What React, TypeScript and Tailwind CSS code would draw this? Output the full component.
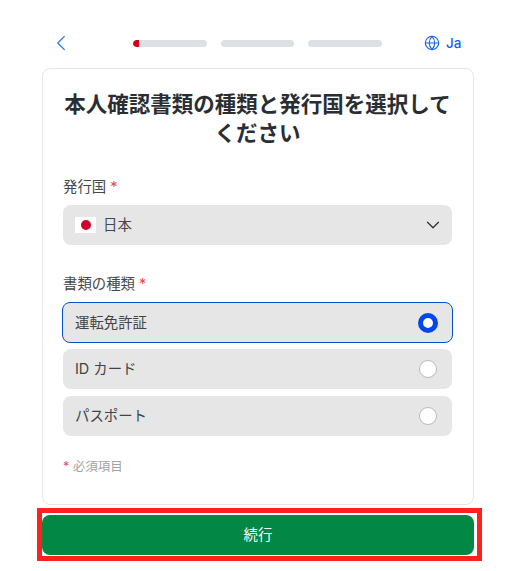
import { ChevronDown, ChevronLeft, Globe } from "lucide-react";

const fontClass = "font-['Inter','Noto_Sans_CJK_JP',sans-serif]";

const documentTypes = [
  { label: "運転免許証", selected: true },
  { label: "ID カード", selected: false },
  { label: "パスポート", selected: false },
];

function Required() {
  return <span className="text-[#f0484e]">*</span>;
}

function RadioRow({ label, selected }: { label: string; selected: boolean }) {
  return (
    <div
      className={`flex items-center justify-between rounded-lg bg-[#e6e6e6] text-[14.4px] text-[#3f4448] ${
        selected
          ? "-mx-px -my-px h-[41px] border border-[#0052cc] pl-[12px] pr-[14px]"
          : "h-10 pl-3 pr-[15px]"
      }`}
    >
      <span>{label}</span>
      {selected ? (
        <span className="h-5 w-5 rounded-full border-[5px] border-[#0047ee] bg-white" />
      ) : (
        <span className="h-[18px] w-[18px] rounded-full border border-[#b9b9b9] bg-white" />
      )}
    </div>
  );
}

export default function App() {
  return (
    <div className={`flex h-[571px] w-[522px] flex-col bg-white pl-[42px] pr-[48px] ${fontClass}`}>
      <header className="flex h-[68px] items-center pt-[18px]">
        <ChevronLeft className="ml-[6px] h-[26px] w-[26px] text-[#3b7cf0]" strokeWidth={1.2} />
        <div className="ml-[59px] flex items-center gap-[14px]">
          <div className="h-[7px] w-[74px] overflow-hidden rounded-full bg-[#dde0e4]">
            <div className="h-full w-[6px] rounded-l-full bg-[#d0021b]" />
          </div>
          <div className="h-[7px] w-[73px] rounded-full bg-[#dde0e4]" />
          <div className="h-[7px] w-[74px] rounded-full bg-[#dde0e4]" />
        </div>
        <div className="ml-[42px] flex items-center gap-[6px] text-[13.5px] font-medium text-[#1463e6]">
          <Globe className="h-4 w-4" strokeWidth={1.6} />
          <span>Ja</span>
        </div>
      </header>

      <main className="flex h-[437px] w-[432px] flex-col rounded-lg border border-[#e6e6e6] pl-5 pr-[21px] pt-[21px]">
        <h1 className="text-center text-[21.5px] leading-[29px] font-bold text-[#2a2e33]">
          本人確認書類の種類と発行国を選択してください
        </h1>

        <label className="mt-[29px] block text-[14.4px] leading-5 text-[#44484c]">
          発行国 <Required />
        </label>
        <div className="mt-[8px] flex h-10 items-center rounded-lg bg-[#e6e6e6] pl-3 pr-2 text-[14.4px] text-[#44484c]">
          <span className="flex h-[16px] w-[21px] items-center justify-center bg-white">
            <span className="h-[10px] w-[10px] rounded-full bg-[#d0002c]" />
          </span>
          <span className="ml-[7px]">日本</span>
          <ChevronDown className="ml-auto h-[22px] w-[22px] text-[#2a2e33]" strokeWidth={1.3} />
        </div>

        <label className="mt-[29px] block text-[14.4px] leading-5 text-[#44484c]">
          書類の種類 <Required />
        </label>
        <div className="mt-[9px] flex flex-col gap-[7px]">
          {documentTypes.map((item) => (
            <RadioRow key={item.label} label={item.label} selected={item.selected} />
          ))}
        </div>

        <p className="mt-[21px] text-[12.5px] leading-5 text-[#a3a3a3]">
          <Required /> 必須項目
        </p>
      </main>

      <div className="mt-[3px] -ml-[5px] h-[53px] w-[445px] border-[5px] border-[#ff2020] pt-[2px]">
        <button className="block h-10 w-[432px] rounded-lg bg-[#028744] text-[14.4px] text-white">続行</button>
      </div>
    </div>
  );
}
